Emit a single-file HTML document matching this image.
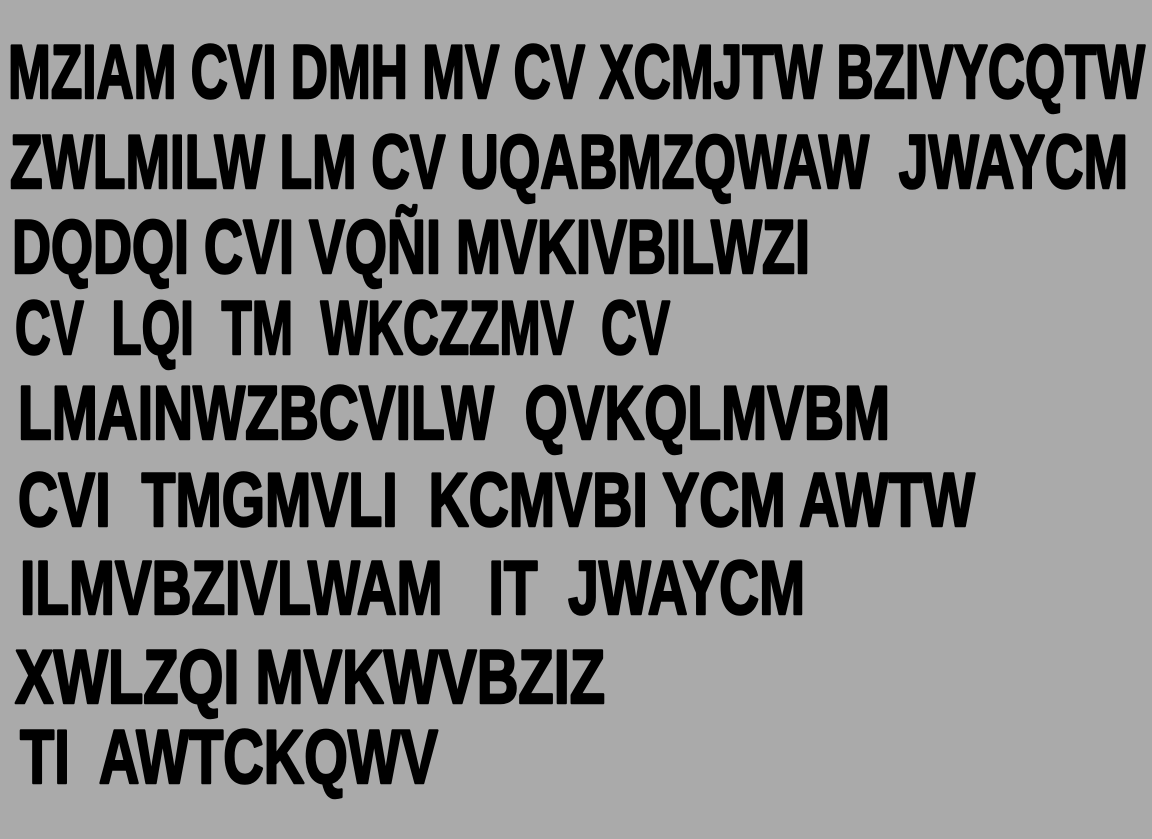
<!DOCTYPE html>
<html><head><meta charset="utf-8">
<style>
html,body{margin:0;padding:0;background:#aaaaaa;width:1152px;height:839px;overflow:hidden}
svg{display:block}
text{font-family:"Liberation Sans Narrow","Liberation Sans",sans-serif;font-weight:bold;font-size:76px;fill:#000;stroke:#000;stroke-width:2.5px;stroke-linejoin:round;white-space:pre}
</style></head><body>
<svg width="1152" height="839" xmlns="http://www.w3.org/2000/svg">
<rect width="1152" height="839" fill="#aaaaaa"/>
<text x="8" y="98" textLength="1137" lengthAdjust="spacingAndGlyphs">MZIAM CVI DMH MV CV XCMJTW BZIVYCQTW</text>
<text x="10" y="188" textLength="1118" lengthAdjust="spacingAndGlyphs">ZWLMILW LM CV UQABMZQWAW  JWAYCM</text>
<text x="12" y="273" textLength="798" lengthAdjust="spacingAndGlyphs">DQDQI CVI VQÑI MVKIVBILWZI</text>
<text x="15" y="354" textLength="655" lengthAdjust="spacingAndGlyphs">CV  LQI  TM  WKCZZMV  CV</text>
<text x="18" y="439" textLength="872" lengthAdjust="spacingAndGlyphs">LMAINWZBCVILW  QVKQLMVBM</text>
<text x="18" y="526" textLength="957" lengthAdjust="spacingAndGlyphs">CVI  TMGMVLI  KCMVBI YCM AWTW</text>
<text x="20" y="614" textLength="785" lengthAdjust="spacingAndGlyphs">ILMVBZIVLWAM   IT  JWAYCM</text>
<text x="15" y="703" textLength="590" lengthAdjust="spacingAndGlyphs">XWLZQI MVKWVBZIZ</text>
<text x="20" y="783" textLength="418" lengthAdjust="spacingAndGlyphs">TI  AWTCKQWV</text>
</svg>
</body></html>
